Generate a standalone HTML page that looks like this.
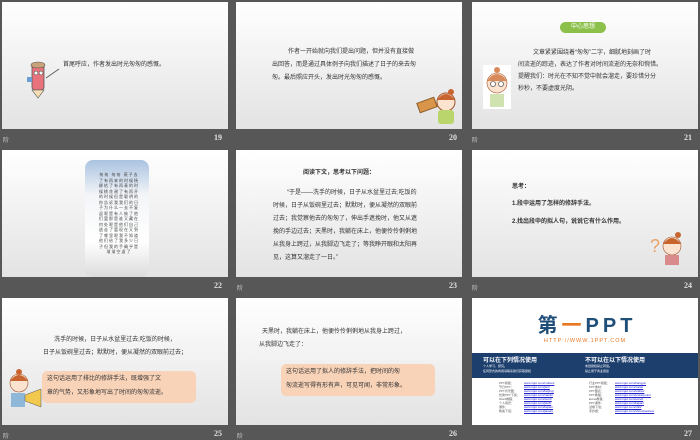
<!DOCTYPE html>
<html><head><meta charset="utf-8"><style>
*{margin:0;padding:0;box-sizing:border-box}
body{width:700px;height:438px;background:#575757;position:relative;overflow:hidden;font-family:"Liberation Sans","Noto Sans CJK SC",sans-serif;color:#333}
.s{position:absolute;width:226px;height:127px;background:linear-gradient(#fff,#e3e3e3);overflow:hidden}
.t{position:absolute;font-size:6px;line-height:13px;white-space:nowrap;color:#333}
.n{position:absolute;font-size:8px;font-weight:bold;color:#e0e0e0;font-family:"Liberation Serif",serif}
.l{position:absolute;font-size:6px;color:#ccc}
.box{position:absolute;background:#f9d3b8;border-radius:5px}
</style></head><body>

<!-- 19 -->
<div class="s" style="left:2px;top:2px">
 <svg style="position:absolute;left:24px;top:58px" width="34" height="40"><rect x="6" y="4" width="12" height="26" rx="3" fill="#e8737c" stroke="#555" stroke-width=".8"/><ellipse cx="12" cy="5" rx="7" ry="3" fill="#c9a27a" stroke="#555" stroke-width=".6"/><polygon points="6,30 18,30 12,38" fill="#f5deb3" stroke="#555" stroke-width=".6"/><circle cx="10" cy="13" r="2" fill="#fff" stroke="#333" stroke-width=".5"/><circle cx="15" cy="13" r="2" fill="#fff" stroke="#333" stroke-width=".5"/><line x1="20" y1="18" x2="33" y2="9" stroke="#555" stroke-width=".8"/><rect x="1" y="17" width="5" height="5" fill="#6a9fd4"/></svg>
 <div class="t" style="left:61px;top:57px">首尾呼应，作者发出时光匆匆的感慨。</div>
</div>
<div class="l" style="left:3px;top:135px">阶</div><div class="n" style="left:214px;top:133px">19</div>

<!-- 20 -->
<div class="s" style="left:236px;top:2px">
 <div class="t" style="left:52px;top:44px">作者一开始就向我们提出问题，但并没有直接做</div>
 <div class="t" style="left:36px;top:57px">出回答，而是通过具体例子向我们描述了日子的来去匆</div>
 <div class="t" style="left:36px;top:70px">匆。最后照应开头，发出时光匆匆的感慨。</div>
 <svg style="position:absolute;left:180px;top:86px" width="46" height="38"><rect x="2" y="12" width="18" height="10" fill="#d9954a" stroke="#8a5a2a" transform="rotate(-20 11 17)"/><circle cx="30" cy="14" r="9" fill="#fbe3cf" stroke="#a0522d"/><path d="M21 12 Q30 0 39 12" fill="#c8642e"/><circle cx="35" cy="4" r="3" fill="#c8642e"/><rect x="22" y="22" width="16" height="14" rx="3" fill="#b9d56b"/></svg>
</div>
<div class="n" style="left:449px;top:133px">20</div>

<!-- 21 -->
<div class="s" style="left:472px;top:2px">
 <div style="position:absolute;left:88px;top:20px;width:46px;height:11px;border-radius:6px;background:#8cc04a;color:#fff;font-size:6px;line-height:11px;text-align:center">中心思想</div>
 <div class="t" style="left:61px;top:45px">文章紧紧围绕着“匆匆”二字，细腻地刻画了时</div>
 <div class="t" style="left:46px;top:57px">间流逝的踪迹，表达了作者对时间流逝的无奈和惋惜。</div>
 <div class="t" style="left:46px;top:69px">提醒我们：时光在不知不觉中就会溜走，要珍惜分分</div>
 <div class="t" style="left:46px;top:81px">秒秒，不要虚度光阴。</div>
 <svg style="position:absolute;left:11px;top:63px" width="28" height="44"><rect width="28" height="44" fill="#fff"/><circle cx="14" cy="18" r="10" fill="#fbe3cf" stroke="#a0522d" stroke-width=".6"/><path d="M4 16 Q14 2 24 16" fill="#d98a5a"/><circle cx="14" cy="5" r="3" fill="#d98a5a"/><circle cx="10" cy="19" r="2.5" fill="#fff" stroke="#333" stroke-width=".6"/><circle cx="18" cy="19" r="2.5" fill="#fff" stroke="#333" stroke-width=".6"/><rect x="7" y="29" width="14" height="13" fill="#cfe2b0"/></svg>
</div>
<div class="l" style="left:472px;top:135px">阶</div><div class="n" style="left:684px;top:133px">21</div>

<!-- 22 -->
<div class="s" style="left:2px;top:150px">
 <div style="position:absolute;left:83px;top:10px;width:64px;height:117px;border-radius:8px;background:linear-gradient(#aac3e0,#f3f5f8 30%,#fff 70%,#dcdcdc);"></div>
 <div style="position:absolute;left:95px;top:22px;width:44px;font-size:4px;line-height:5.5px;color:#444;letter-spacing:1px;text-align:center">匆匆 匆匆 燕子去了有再来的时候杨柳枯了有再青的时候桃花谢了有再开的时候但是聪明的你告诉我我们的日子为什么一去不复返呢是有人偷了他们罢那是谁又藏在何处呢是他们自己逃走了罢现在又到了哪里呢我不知道他们给了我多少日子但我的手确乎是渐渐空虚了</div>
</div>
<div class="n" style="left:214px;top:281px">22</div>

<!-- 23 -->
<div class="s" style="left:236px;top:150px">
 <div class="t" style="left:67px;top:17px;font-weight:bold">阅读下文，思考以下问题：</div>
 <div class="t" style="left:51px;top:37px">“于是——洗手的时候，日子从水盆里过去;吃饭的</div>
 <div class="t" style="left:37px;top:50px">时候，日子从饭碗里过去；默默时，便从凝然的双眼前</div>
 <div class="t" style="left:37px;top:63px">过去；我觉察他去的匆匆了，伸出手遮挽时，他又从遮</div>
 <div class="t" style="left:37px;top:76px">挽的手边过去；天黑时，我躺在床上，他便伶伶俐俐地</div>
 <div class="t" style="left:37px;top:89px">从我身上跨过，从我脚边飞走了；等我睁开眼和太阳再</div>
 <div class="t" style="left:37px;top:102px">见，这算又溜走了一日。”</div>
</div>
<div class="l" style="left:237px;top:283px">阶</div><div class="n" style="left:449px;top:281px">23</div>

<!-- 24 -->
<div class="s" style="left:472px;top:150px">
 <div class="t" style="left:40px;top:31px;font-weight:bold">思考：</div>
 <div class="t" style="left:40px;top:48px;font-weight:bold">1.段中运用了怎样的修辞手法。</div>
 <div class="t" style="left:40px;top:66px;font-weight:bold">2.找出段中的拟人句，说说它有什么作用。</div>
 <svg style="position:absolute;left:178px;top:80px" width="36" height="40"><text x="0" y="22" font-size="18" fill="#e9a26a" font-family="Liberation Sans">?</text><circle cx="22" cy="16" r="9" fill="#fbe3cf" stroke="#a0522d" stroke-width=".6"/><path d="M13 14 Q22 2 31 14" fill="#c8642e"/><circle cx="28" cy="5" r="3" fill="#c8642e"/><rect x="15" y="25" width="14" height="10" fill="#d98a8a"/></svg>
</div>
<div class="l" style="left:472px;top:283px">阶</div><div class="n" style="left:684px;top:281px">24</div>

<!-- 25 -->
<div class="s" style="left:2px;top:298px">
 <div class="t" style="left:0;width:226px;text-align:center;top:36px">洗手的时候，日子从水盆里过去;吃饭的时候，</div>
 <div class="t" style="left:0;width:226px;text-align:center;top:49px">日子从饭碗里过去；默默时，便从凝然的双眼前过去；</div>
 <div class="box" style="left:40px;top:73px;width:154px;height:32px"></div>
 <div class="t" style="left:45px;top:75px">这句话运用了排比的修辞手法，既增强了文</div>
 <div class="t" style="left:45px;top:89px">章的气势，又形象地写出了时间的匆匆流逝。</div>
 <svg style="position:absolute;left:3px;top:71px" width="38" height="42"><circle cx="14" cy="14" r="9" fill="#fbe3cf" stroke="#a0522d" stroke-width=".6"/><path d="M5 12 Q14 0 23 12" fill="#c8642e"/><circle cx="14" cy="3" r="3" fill="#c8642e"/><rect x="6" y="24" width="14" height="14" fill="#8fb8d8"/><polygon points="20,26 36,20 36,38 20,32" fill="#f2c94c" stroke="#555" stroke-width=".5"/></svg>
</div>
<div class="l" style="left:3px;top:431px">阶</div><div class="n" style="left:214px;top:429px">25</div>

<!-- 26 -->
<div class="s" style="left:236px;top:298px">
 <div class="t" style="left:26px;top:28px">天黑时，我躺在床上，他便伶伶俐俐地从我身上跨过，</div>
 <div class="t" style="left:23px;top:41px">从我脚边飞走了：</div>
 <div class="box" style="left:45px;top:66px;width:154px;height:32px"></div>
 <div class="t" style="left:50px;top:68px">这句话运用了拟人的修辞手法，把时间的匆</div>
 <div class="t" style="left:50px;top:82px">匆流逝写得有形有声，可见可闻，非常形象。</div>
</div>
<div class="l" style="left:237px;top:431px">阶</div><div class="n" style="left:449px;top:429px">26</div>

<!-- 27 -->
<div class="s" style="left:472px;top:298px;background:#fff">
 <div style="position:absolute;left:0;width:226px;top:16px;text-align:center;font-size:20px;font-weight:bold;color:#1f4e79;line-height:24px;letter-spacing:4px;padding-left:4px">第<span style="color:#e87722">一</span>PPT</div>
 <div style="position:absolute;left:0;width:226px;top:40px;text-align:center;font-size:5.5px;color:#e87722;letter-spacing:1px">HTTP://WWW.1PPT.COM</div>
 <div style="position:absolute;left:0;top:55px;width:226px;height:25px;background:#1c3f6e;color:#fff">
  <div style="position:absolute;left:11px;top:2px;font-size:6px;font-weight:bold">可以在下列情况使用</div>
  <div style="position:absolute;left:113px;top:2px;font-size:6px;font-weight:bold">不可以在以下情况使用</div>
  <div style="position:absolute;left:11px;top:11px;font-size:3px;line-height:5px">个人学习、研究。<br>任何形式的商用请联系我们获取授权</div>
  <div style="position:absolute;left:113px;top:11px;font-size:3px;line-height:5px">未经授权禁止转载。<br>禁止用于商业用途</div>
 </div>
 <div style="position:absolute;left:27px;top:83px;font-size:3px;line-height:4px;color:#555">PPT模板：<br>节日PPT：<br>PPT背景图：<br>优秀PPT下载：<br>Word教程：<br>个人简历：<br>课件：<br>教案下载：</div>
 <div style="position:absolute;left:52px;top:83px;font-size:3px;line-height:4px;color:#22c;text-decoration:underline">www.1ppt.com/moban/<br>www.1ppt.com/jieri/<br>www.1ppt.com/beijing/<br>www.1ppt.com/xiazai/<br>www.1ppt.com/word/<br>www.1ppt.com/jianli/<br>www.1ppt.com/kejian/<br>www.1ppt.com/jiaoan/</div>
 <div style="position:absolute;left:117px;top:83px;font-size:3px;line-height:4px;color:#555">行业PPT模板：<br>PPT素材：<br>PPT图表：<br>PPT教程：<br>Excel教程：<br>PPT课件：<br>试卷下载：<br>手抄报：</div>
 <div style="position:absolute;left:143px;top:83px;font-size:3px;line-height:4px;color:#22c;text-decoration:underline">www.1ppt.com/hangye/<br>www.1ppt.com/sucai/<br>www.1ppt.com/tubiao/<br>www.1ppt.com/powerpoint/<br>www.1ppt.com/excel/<br>www.1ppt.com/kejian/<br>www.1ppt.com/shiti/<br>www.1ppt.com/shouchaobao/</div>
</div>
<div class="n" style="left:684px;top:429px">27</div>

</body></html>
